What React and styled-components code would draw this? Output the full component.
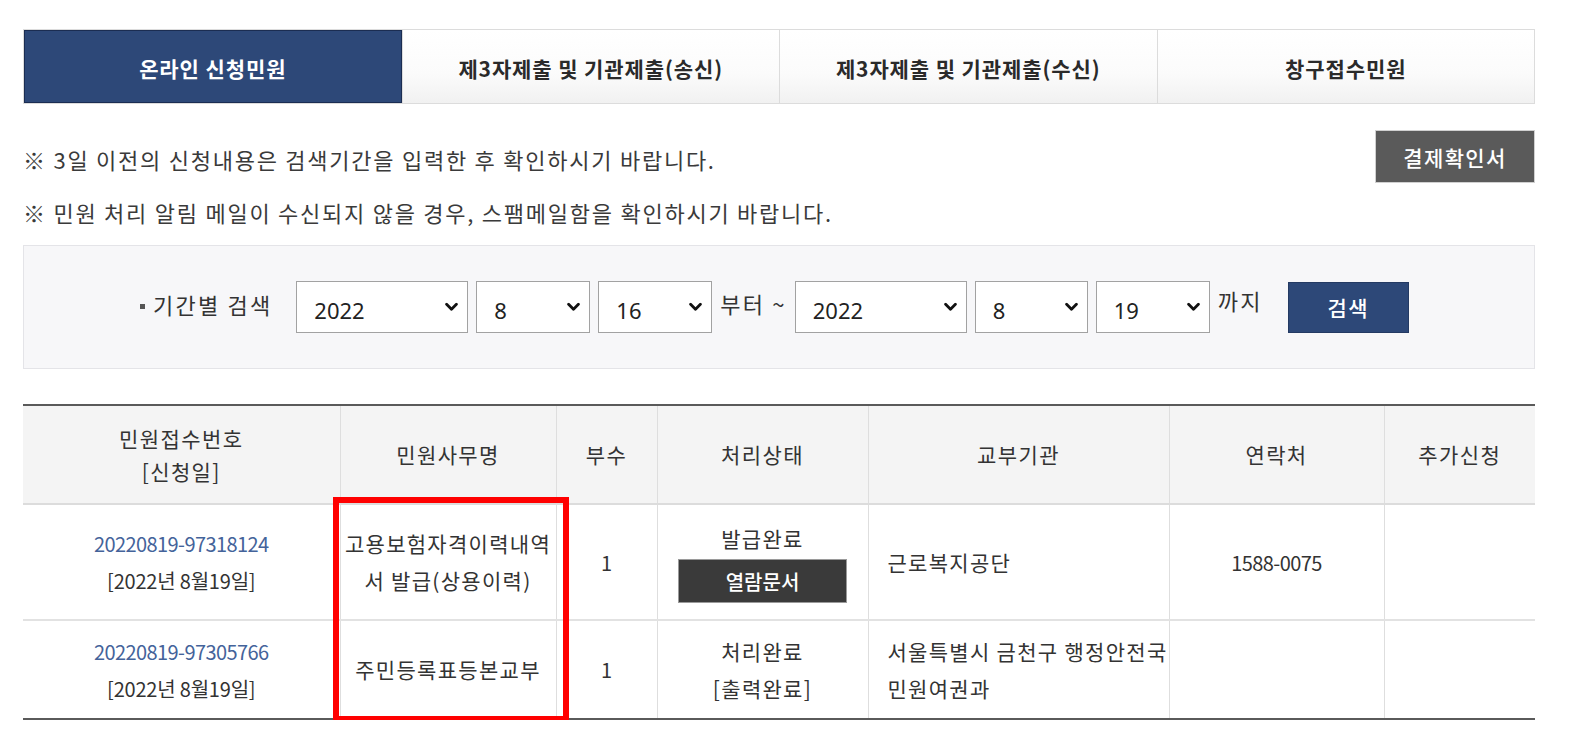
import React from "react";
import styled, { createGlobalStyle } from "styled-components";

const Global = createGlobalStyle`
  html, body { margin: 0; padding: 0; background: #fff; }
  body { font-family: "Noto Sans CJK KR", "Noto Sans", sans-serif; color: #333; }
  * { box-sizing: border-box; }
`;

const Page = styled.div`
  width: 1586px;
  padding: 29px 0 0 23px;
`;

const Content = styled.div`
  width: 1512px;
`;

const Tabs = styled.div`
  display: grid;
  grid-template-columns: repeat(4, 1fr);
  height: 75px;
  border: 1px solid #dcdcdc;
`;

const Tab = styled.div`
  display: flex;
  align-items: center;
  justify-content: center;
  font-size: 21px;
  font-weight: 700;
  letter-spacing: 0.9px;
  color: ${(p) => (p.$active ? "#fff" : "#2a2a2a")};
  background: ${(p) =>
    p.$active ? "#2d4878" : "linear-gradient(#ffffff 0%, #fbfbfb 60%, #f1f1f1 100%)"};
  border-left: ${(p) => (p.$first ? "none" : "1px solid #dcdcdc")};
  outline: ${(p) => (p.$active ? "1px solid #1b2d52" : "none")};
  outline-offset: -1px;
  padding-top: 3px;
`;

const NoticeArea = styled.div`
  padding-top: 26px;
  padding-bottom: 18px;
`;

const NoticeRow = styled.div`
  display: flex;
  align-items: center;
  justify-content: space-between;
  height: 53px;
`;

const Notice = styled.p`
  margin: ${(p) => (p.$second ? "14px 0 0" : "0")};
  font-size: 22px;
  line-height: 30px;
  color: #3a3a3a;
  letter-spacing: 1.75px;
  padding-top: ${(p) => (p.$second ? "0" : "5px")};
`;

const GrayButton = styled.button`
  width: 160px;
  height: 53px;
  background: #5a5a5a;
  color: #fff;
  border: 1px solid #d0d0d0;
  font-family: inherit;
  font-size: 21px;
  font-weight: 500;
  letter-spacing: 1.4px;
  cursor: pointer;
`;

const SearchBox = styled.div`
  height: 124px;
  background: #f7f7f9;
  border: 1px solid #e4e4e8;
  display: flex;
  align-items: center;
  padding-left: 116px;
`;

const SearchLabel = styled.span`
  font-size: 22px;
  color: #333;
  margin-right: 24px;
  letter-spacing: 2.2px;
  display: flex;
  align-items: center;
  gap: 8px;
  position: relative;
  top: -3px;
`;

const Dot = styled.span`
  display: inline-block;
  width: 5px;
  height: 5px;
  background: #555;
  position: relative;
  top: 2px;
`;

const SelectWrap = styled.div`
  position: relative;
  width: ${(p) => p.$w}px;
  height: 52px;
  margin-right: 8px;
`;

const Select = styled.select`
  appearance: none;
  -webkit-appearance: none;
  width: 100%;
  height: 100%;
  border: 1px solid #a2a2a2;
  background: #fff;
  font-family: "Noto Sans", "Noto Sans CJK KR", sans-serif;
  font-size: 22px;
  color: #222;
  padding: 5px 0 0 17px;
  border-radius: 0;
  outline: none;
`;

const Chevron = styled.svg`
  position: absolute;
  right: 10px;
  top: 50%;
  transform: translateY(-50%);
  width: 13px;
  height: 9px;
  pointer-events: none;
`;

const Word = styled.span`
  font-size: 22px;
  color: #333;
  margin-right: ${(p) => p.$mr || 0}px;
  position: relative;
  top: ${(p) => (p.$raise ? "-7px" : "-4px")};
  letter-spacing: 2.2px;
`;

const NavyButton = styled.button`
  width: 121px;
  height: 51px;
  background: #2d4878;
  color: #fff;
  border: 1px solid #243a63;
  font-family: inherit;
  font-size: 21px;
  font-weight: 500;
  letter-spacing: 1.4px;
  cursor: pointer;
`;

const TableWrap = styled.div`
  position: relative;
  margin-top: 35px;
`;

const Table = styled.table`
  width: 1512px;
  border-collapse: collapse;
  table-layout: fixed;
  border-top: 2px solid #5a5a5a;
  border-bottom: 2px solid #5a5a5a;
  font-size: 21px;
  color: #333;
`;

const Th = styled.th`
  height: 99px;
  background: #f4f4f4;
  font-weight: 400;
  line-height: 33px;
  border-left: ${(p) => (p.$first ? "none" : "1px solid #dedede")};
  border-bottom: 2px solid #dcdcdc;
  letter-spacing: 1.4px;
  padding: 0;
`;

const Td = styled.td`
  height: ${(p) => p.$h}px;
  text-align: ${(p) => (p.$left ? "left" : "center")};
  padding: ${(p) => (p.$left ? "0 0 0 19px" : "0 4px")};
  line-height: 37px;
  border-left: ${(p) => (p.$first ? "none" : "1px solid #dedede")};
  border-bottom: ${(p) => (p.$lastRow ? "none" : "2px solid #e2e2e2")};
  letter-spacing: 1.3px;
  vertical-align: middle;
  word-break: ${(p) => (p.$keep ? "keep-all" : "normal")};
`;

const Num = styled.span`
  font-size: 20px;
  letter-spacing: ${(p) => (p.$tight ? "-0.6px" : "-0.2px")};
  color: ${(p) => (p.$link ? "#44639a" : "inherit")};
`;

const Status = styled.div`
  line-height: 34px;
  padding-bottom: 4px;
`;

const DarkButton = styled.button`
  width: 169px;
  height: 44px;
  background: #3a3a3a;
  color: #fff;
  border: 1px solid #9a9a9a;
  font-family: inherit;
  font-size: 20px;
  font-weight: 500;
  cursor: pointer;
  display: block;
  margin: 0 auto;
`;

const Highlight = styled.div`
  position: absolute;
  left: 310px;
  width: 236px;
  top: 93px;
  bottom: -2px;
  border: 6px solid #ff0000;
  pointer-events: none;
`;

function DateSelect({ w, value, options }) {
  return (
    <SelectWrap $w={w}>
      <Select defaultValue={value}>
        {options.map((o) => (
          <option key={o}>{o}</option>
        ))}
      </Select>
      <Chevron viewBox="0 0 13 9">
        <path d="M1.6 1.8 L6.5 6.8 L11.4 1.8" fill="none" stroke="#111" strokeWidth="2.8" strokeLinecap="round" strokeLinejoin="round" />
      </Chevron>
    </SelectWrap>
  );
}

const years = ["2020", "2021", "2022"];
const months = Array.from({ length: 12 }, (_, i) => String(i + 1));
const days = Array.from({ length: 31 }, (_, i) => String(i + 1));

export default function App() {
  return (
    <>
      <Global />
      <Page>
        <Content>
          <Tabs>
            <Tab $active $first>온라인 신청민원</Tab>
            <Tab>제3자제출 및 기관제출(송신)</Tab>
            <Tab>제3자제출 및 기관제출(수신)</Tab>
            <Tab>창구접수민원</Tab>
          </Tabs>

          <NoticeArea>
            <NoticeRow>
              <Notice>※ 3일 이전의 신청내용은 검색기간을 입력한 후 확인하시기 바랍니다.</Notice>
              <GrayButton>결제확인서</GrayButton>
            </NoticeRow>
            <Notice $second>※ 민원 처리 알림 메일이 수신되지 않을 경우, 스팸메일함을 확인하시기 바랍니다.</Notice>
          </NoticeArea>

          <SearchBox>
            <SearchLabel>
              <Dot />
              기간별 검색
            </SearchLabel>
            <DateSelect w={172} value="2022" options={years} />
            <DateSelect w={114} value="8" options={months} />
            <DateSelect w={114} value="16" options={days} />
            <Word $mr={8}>부터 ~</Word>
            <DateSelect w={172} value="2022" options={years} />
            <DateSelect w={113} value="8" options={months} />
            <DateSelect w={114} value="19" options={days} />
            <Word $mr={25} $raise>까지</Word>
            <NavyButton>검색</NavyButton>
          </SearchBox>

          <TableWrap>
            <Table>
              <colgroup>
                <col style={{ width: 317 }} />
                <col style={{ width: 216 }} />
                <col style={{ width: 101 }} />
                <col style={{ width: 211 }} />
                <col style={{ width: 301 }} />
                <col style={{ width: 215 }} />
                <col style={{ width: 151 }} />
              </colgroup>
              <thead>
                <tr>
                  <Th $first>민원접수번호<br />[신청일]</Th>
                  <Th>민원사무명</Th>
                  <Th>부수</Th>
                  <Th>처리상태</Th>
                  <Th>교부기관</Th>
                  <Th>연락처</Th>
                  <Th>추가신청</Th>
                </tr>
              </thead>
              <tbody>
                <tr>
                  <Td $first $h={116}>
                    <Num $link $tight>20220819-97318124</Num>
                    <br />
                    <Num>[2022년 8월19일]</Num>
                  </Td>
                  <Td $h={116}>고용보험자격이력내역서 발급(상용이력)</Td>
                  <Td $h={116}><Num>1</Num></Td>
                  <Td $h={116}>
                    <Status>발급완료</Status>
                    <DarkButton>열람문서</DarkButton>
                  </Td>
                  <Td $h={116} $left>근로복지공단</Td>
                  <Td $h={116}><Num $tight>1588-0075</Num></Td>
                  <Td $h={116}></Td>
                </tr>
                <tr>
                  <Td $first $h={99} $lastRow>
                    <Num $link $tight>20220819-97305766</Num>
                    <br />
                    <Num>[2022년 8월19일]</Num>
                  </Td>
                  <Td $h={99} $lastRow>주민등록표등본교부</Td>
                  <Td $h={99} $lastRow><Num>1</Num></Td>
                  <Td $h={99} $lastRow>처리완료<br />[출력완료]</Td>
                  <Td $h={99} $lastRow $left $keep>서울특별시 금천구 행정안전국 민원여권과</Td>
                  <Td $h={99} $lastRow></Td>
                  <Td $h={99} $lastRow></Td>
                </tr>
              </tbody>
            </Table>
            <Highlight />
          </TableWrap>
        </Content>
      </Page>
    </>
  );
}
